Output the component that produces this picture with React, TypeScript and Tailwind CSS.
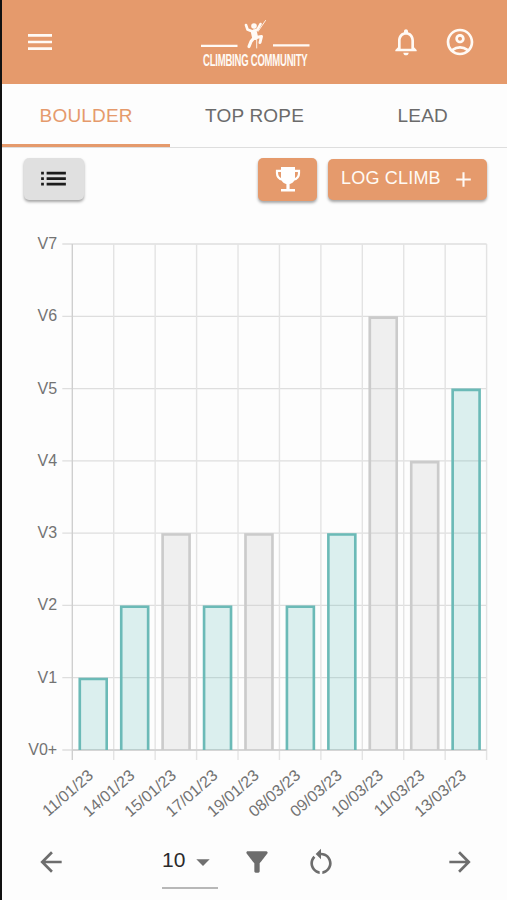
import React, { useState } from 'react';
import {
  MdAdd,
  MdArrowBack,
  MdArrowDropDown,
  MdArrowForward,
  MdFilterAlt,
  MdList,
  MdMenu,
  MdNotificationsNone,
  MdOutlineAccountCircle,
  MdRestartAlt,
} from 'react-icons/md';

interface Climb {
  date: string;
  grade: number;
  sent: boolean;
}

const tabs = ['BOULDER', 'TOP ROPE', 'LEAD'];

const grades = ['V0+', 'V1', 'V2', 'V3', 'V4', 'V5', 'V6', 'V7'];

const climbs: Climb[] = [
  { date: '11/01/23', grade: 1, sent: true },
  { date: '14/01/23', grade: 2, sent: true },
  { date: '15/01/23', grade: 3, sent: false },
  { date: '17/01/23', grade: 2, sent: true },
  { date: '19/01/23', grade: 3, sent: false },
  { date: '08/03/23', grade: 2, sent: true },
  { date: '09/03/23', grade: 3, sent: true },
  { date: '10/03/23', grade: 6, sent: false },
  { date: '11/03/23', grade: 4, sent: false },
  { date: '13/03/23', grade: 5, sent: true },
];

// Plot area inside the 505x620 chart svg
const LEFT = 70.3;
const RIGHT = 484.6;
const TOP = 33;
const BOTTOM = 539;
const COL = (RIGHT - LEFT) / climbs.length;
const ROW = (BOTTOM - TOP) / (grades.length - 1);

const Logo: React.FC = () => (
  <svg
    width="112"
    height="52"
    viewBox="0 0 112 52"
    fill="none"
    className="overflow-visible"
    aria-label="Climbing Community"
  >
    <g stroke="#fffaf5" strokeLinecap="round" strokeLinejoin="round">
      <path d="M46 9l1.500 4.500 5 2 5-2 3-5.500" strokeWidth="2.600" />
      <path d="M54 16.500l1 4.500" strokeWidth="6" />
      <path d="M53.500 22.500l-2.500 3-2 5" strokeWidth="3.200" />
      <path d="M56 21.500l5.500-1-1.500 6" strokeWidth="3" />
      <path d="M65.500 4.500l-7.500 11M56.700 23v9" strokeWidth="0.900" />
    </g>
    <circle cx="54" cy="10" r="2.800" fill="#fffaf5" />
    <path d="M1 29.800h36.500M73 29.300h36.500" stroke="#fffaf5" strokeWidth="2.200" />
    <text
      transform="translate(3 50.200) scale(0.56 1)"
      fontSize="17"
      fontWeight="700"
      textLength="187"
      fill="#fffaf5"
    >
      CLIMBING COMMUNITY
    </text>
  </svg>
);

const TrophyIcon: React.FC = () => (
  <svg width="26" height="25" viewBox="0 0 26 25" fill="currentColor" aria-hidden="true">
    <path d="M6 0h14v10.500c0 3.600-2.700 6-5.400 6.500v5h5.400v2.500H6V22h5.400v-5C8.700 16.500 6 14.100 6 10.500z" />
    <path
      d="M7 3.800H2v2.400c0 3.600 2.200 5.800 5.800 6.600M19 3.800h5v2.400c0 3.600-2.200 5.800-5.800 6.600"
      fill="none"
      stroke="currentColor"
      strokeWidth="2.200"
    />
  </svg>
);

const GradeChart: React.FC = () => (
  <svg width="505" height="620" viewBox="0 0 505 620" className="block" fontSize="16" fill="#737373">
    {grades.map((grade, i) => {
      const y = BOTTOM - i * ROW;
      return (
        <g key={grade}>
          <line x1={LEFT - 10} x2={RIGHT} y1={y} y2={y} stroke="#dedede" strokeWidth="1.3" />
          <text x="55.2" y={y + 5} textAnchor="end">
            {grade}
          </text>
        </g>
      );
    })}
    {Array.from({ length: climbs.length + 1 }, (_, i) => (
      <line
        key={i}
        x1={LEFT + i * COL}
        x2={LEFT + i * COL}
        y1={TOP}
        y2={BOTTOM + 10}
        stroke={i === 0 ? '#cfcfcf' : '#e3e3e3'}
        strokeWidth="1.4"
      />
    ))}
    <line x1={LEFT} x2={RIGHT} y1={BOTTOM} y2={BOTTOM} stroke="#cfcfcf" strokeWidth="1.4" />
    {climbs.map(({ date, grade, sent }, i) => {
      const x = LEFT + i * COL + 6.2;
      const y = BOTTOM - grade * ROW;
      const center = LEFT + (i + 0.5) * COL;
      return (
        <g key={date}>
          <rect
            x={x}
            y={y}
            width="29.5"
            height={BOTTOM - y}
            fill={sent ? '#4bb5b0' : '#c9c9c9'}
            fillOpacity={sent ? 0.19 : 0.25}
          />
          <path
            d={`M${x + 1.3} ${BOTTOM}V${y + 1.3}h26.9V${BOTTOM}`}
            fill="none"
            stroke={sent ? '#6bbab7' : '#cbcbcb'}
            strokeWidth="2.6"
          />
          <text textAnchor="end" transform={`translate(${center + 1.3} ${BOTTOM + 27}) rotate(-41)`}>
            {date}
          </text>
        </g>
      );
    })}
  </svg>
);

export default function App() {
  const [activeTab, setActiveTab] = useState(tabs[0]);

  return (
    <div className="flex h-[900px] w-[507px] flex-col overflow-hidden border-l-2 border-[#111] bg-[#fdfdfd] font-['Liberation_Sans',Arial,sans-serif]">
      <header className="flex h-[84px] shrink-0 items-center justify-between bg-[#e59a6c] pr-[31px] pl-[22px] text-[#fffaf5]">
        <button type="button" aria-label="Menu" className="flex w-[86px]">
          <MdMenu size={32} />
        </button>
        <div className="ml-3">
          <Logo />
        </div>
        <div className="flex items-center gap-[22px]">
          <MdNotificationsNone size={32} />
          <MdOutlineAccountCircle size={32} />
        </div>
      </header>

      <nav className="flex h-16 shrink-0 border-b border-[#dedede]">
        {tabs.map((tab) => (
          <button
            key={tab}
            type="button"
            onClick={() => setActiveTab(tab)}
            className={
              tab === activeTab
                ? 'flex-1 border-b-[3px] border-[#e59a6c] pt-1 text-[19px] tracking-[0.2px] text-[#e59a6c]'
                : 'flex-1 border-b-[3px] border-transparent pt-1 text-[19px] tracking-[0.2px] text-[#6b6b6b]'
            }
          >
            {tab}
          </button>
        ))}
      </nav>

      <div className="flex shrink-0 items-start pt-2.5 pr-5 pl-[22px]">
        <button
          type="button"
          aria-label="List"
          className="mr-auto flex h-[42px] w-[60px] items-center justify-center rounded-[5px] bg-[#e0e0e0] pr-[2px] pb-[1px] text-[#1c1c1c] shadow-[0_2px_3px_rgba(0,0,0,0.35)]"
        >
          <MdList size={33} />
        </button>
        <button
          type="button"
          aria-label="Achievements"
          className="mr-[11px] flex h-[43px] w-[59px] items-center justify-center rounded-[5px] bg-[#e59a6c] text-white shadow-[0_2px_3px_rgba(0,0,0,0.35)]"
        >
          <TrophyIcon />
        </button>
        <button
          type="button"
          className="mt-px flex h-[41px] w-[159px] items-center rounded-[5px] bg-[#e59a6c] pl-[13px] text-[18px] tracking-[0.2px] text-[#fffaf5] shadow-[0_2px_3px_rgba(0,0,0,0.35)]"
        >
          <span className="w-[110px] pb-0.5 text-left whitespace-nowrap">LOG CLIMB</span>
          <MdAdd size={25} />
        </button>
      </div>

      <main className="mt-[10px] h-[620px] shrink-0">
        <GradeChart />
      </main>

      <footer className="flex h-[69px] shrink-0 items-start pr-[31px] pl-[33px] text-[#6d6d6d]">
        <button type="button" aria-label="Previous" className="mt-[15px] mr-[95px]">
          <MdArrowBack size={32} />
        </button>
        <button
          type="button"
          className="mt-3 mr-[23px] flex h-[46px] w-[56px] items-start border-b-2 border-[#b8b8b8] pt-px text-[21px] text-[#2b2b2b]"
        >
          10
          <MdArrowDropDown size={32} className="mt-0.5 ml-0.5 shrink-0 text-[#707070]" />
        </button>
        <button type="button" aria-label="Filter" className="mt-[15px] mr-[32px]">
          <MdFilterAlt size={32} />
        </button>
        <button type="button" aria-label="Reset" className="mt-[15px] mr-auto">
          <MdRestartAlt size={32} />
        </button>
        <button type="button" aria-label="Next" className="mt-[15px]">
          <MdArrowForward size={32} />
        </button>
      </footer>
    </div>
  );
}
